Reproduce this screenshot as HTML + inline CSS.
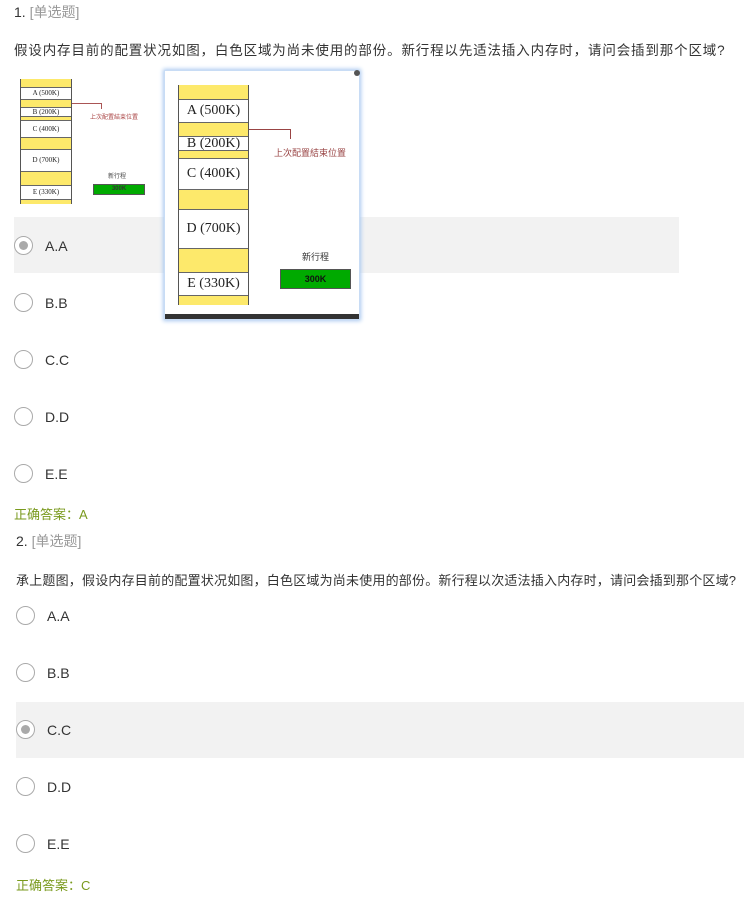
<!DOCTYPE html>
<html><head><meta charset="utf-8"><style>
*{margin:0;padding:0;box-sizing:border-box}
body{width:744px;height:912px;background:#fff;position:relative;overflow:hidden;font-family:"Liberation Sans","Noto Sans CJK SC",sans-serif;color:#333}
.a{position:absolute;white-space:nowrap}
.t{font-size:14px;color:#333}
.t span{color:#999}
.q{font-size:13px;color:#333}
.hl{position:absolute;background:#f2f2f2}
.r{position:absolute;width:19px;height:19px;border:1px solid #aaa;border-radius:50%;background:#fff}
.r.c::after{content:"";position:absolute;left:4px;top:4px;width:9px;height:9px;border-radius:50%;background:#aaa}
.o{position:absolute;font-size:14px;color:#333;line-height:18px}
.ans{position:absolute;font-size:13px;color:#7a9a1e}
.col{position:absolute;border-left:1px solid #555;border-right:1px solid #555}
.col div{position:absolute;left:0;right:0;font-family:"Liberation Serif",serif;color:#222;text-align:center;overflow:hidden}
.y{background:#fde96b}
.w{background:#fff;border-top:1px solid #666;border-bottom:1px solid #666}
</style></head><body>
<div class="a t" style="left:14px;top:2px">1. <span>[单选题]</span></div>
<div class="a q" style="left:14px;top:39px;font-size:13.5px;letter-spacing:0.85px">假设内存目前的配置状况如图，白色区域为尚未使用的部份。新行程以先适法插入内存时，请问会插到那个区域?</div>

<!-- small diagram -->
<div class="col" style="left:20px;top:79px;width:52px;height:125px">
<div class="y" style="top:0;height:8px"></div>
<div class="w" style="top:8px;height:13px;font-size:7px;line-height:11px">A (500K)</div>
<div class="y" style="top:21px;height:7px"></div>
<div class="w" style="top:28px;height:10px;font-size:7px;line-height:8px">B (200K)</div>
<div class="y" style="top:38px;height:3px"></div>
<div class="w" style="top:41px;height:18px;font-size:7px;line-height:16px">C (400K)</div>
<div class="y" style="top:59px;height:11px"></div>
<div class="w" style="top:70px;height:23px;font-size:7px;line-height:21px">D (700K)</div>
<div class="y" style="top:93px;height:13px"></div>
<div class="w" style="top:106px;height:15px;font-size:7px;line-height:13px">E (330K)</div>
<div class="y" style="top:121px;height:4px"></div>
</div>
<div class="a" style="left:72px;top:103px;width:30px;height:1px;background:#a55"></div>
<div class="a" style="left:101px;top:103px;width:1px;height:6px;background:#a55"></div>
<div class="a" style="left:90px;top:112px;font-size:6px;color:#a44">上次配置結束位置</div>
<div class="a" style="left:108px;top:171px;font-size:6px;color:#444">新行程</div>
<div class="a" style="left:93px;top:184px;width:52px;height:11px;background:#0a0;border:1px solid #555;font-size:6px;font-weight:bold;text-align:center;line-height:9px">300K</div>

<!-- Q1 options -->
<div class="hl" style="left:14px;top:217px;width:665px;height:56px"></div>
<div class="r c" style="left:14px;top:236px"></div><div class="o" style="left:45px;top:237px">A.A</div>
<div class="r" style="left:14px;top:293px"></div><div class="o" style="left:45px;top:294px">B.B</div>
<div class="r" style="left:14px;top:350px"></div><div class="o" style="left:45px;top:351px">C.C</div>
<div class="r" style="left:14px;top:407px"></div><div class="o" style="left:45px;top:408px">D.D</div>
<div class="r" style="left:14px;top:464px"></div><div class="o" style="left:45px;top:465px">E.E</div>
<div class="ans" style="left:14px;top:504px">正确答案：A</div>

<!-- popup -->
<div class="a" style="left:164px;top:70px;width:196px;height:250px;background:#fff;box-shadow:0 0 4px 1px #a9c8f0;border:1px solid #c8dcf5">
<div class="a" style="left:0;right:0;bottom:0;height:5px;background:#333"></div>
<div class="a" style="right:-1px;top:-1px;width:6px;height:6px;background:#555;border-radius:50%"></div>
</div>
<div class="col" style="left:178px;top:85px;width:71px;height:220px">
<div class="y" style="top:0;height:14px"></div>
<div class="w" style="top:14px;height:24px;font-size:14px;line-height:22px">A (500K)</div>
<div class="y" style="top:38px;height:13px"></div>
<div class="w" style="top:51px;height:15px;font-size:14px;line-height:13px">B (200K)</div>
<div class="y" style="top:66px;height:7px"></div>
<div class="w" style="top:73px;height:32px;font-size:14px;line-height:30px">C (400K)</div>
<div class="y" style="top:105px;height:19px"></div>
<div class="w" style="top:124px;height:40px;font-size:14px;line-height:38px">D (700K)</div>
<div class="y" style="top:164px;height:23px"></div>
<div class="w" style="top:187px;height:24px;font-size:14px;line-height:22px">E (330K)</div>
<div class="y" style="top:211px;height:9px"></div>
</div>
<div class="a" style="left:249px;top:129px;width:41px;height:1px;background:#944"></div>
<div class="a" style="left:290px;top:129px;width:1px;height:10px;background:#944"></div>
<div class="a" style="left:274px;top:146px;font-size:9px;color:#944">上次配置結束位置</div>
<div class="a" style="left:302px;top:250px;font-size:9px;color:#333">新行程</div>
<div class="a" style="left:280px;top:269px;width:71px;height:20px;background:#0a0;border:1px solid #555;font-size:9px;font-weight:bold;text-align:center;line-height:18px;color:#111">300K</div>

<!-- Q2 -->
<div class="a t" style="left:16px;top:531px">2. <span>[单选题]</span></div>
<div class="a q" style="left:16px;top:570px;letter-spacing:0.2px">承上题图，假设内存目前的配置状况如图，白色区域为尚未使用的部份。新行程以次适法插入内存时，请问会插到那个区域?</div>
<div class="hl" style="left:16px;top:702px;width:728px;height:56px"></div>
<div class="r" style="left:16px;top:606px"></div><div class="o" style="left:47px;top:607px">A.A</div>
<div class="r" style="left:16px;top:663px"></div><div class="o" style="left:47px;top:664px">B.B</div>
<div class="r c" style="left:16px;top:720px"></div><div class="o" style="left:47px;top:721px">C.C</div>
<div class="r" style="left:16px;top:777px"></div><div class="o" style="left:47px;top:778px">D.D</div>
<div class="r" style="left:16px;top:834px"></div><div class="o" style="left:47px;top:835px">E.E</div>
<div class="ans" style="left:16px;top:875px">正确答案：C</div>
</body></html>
